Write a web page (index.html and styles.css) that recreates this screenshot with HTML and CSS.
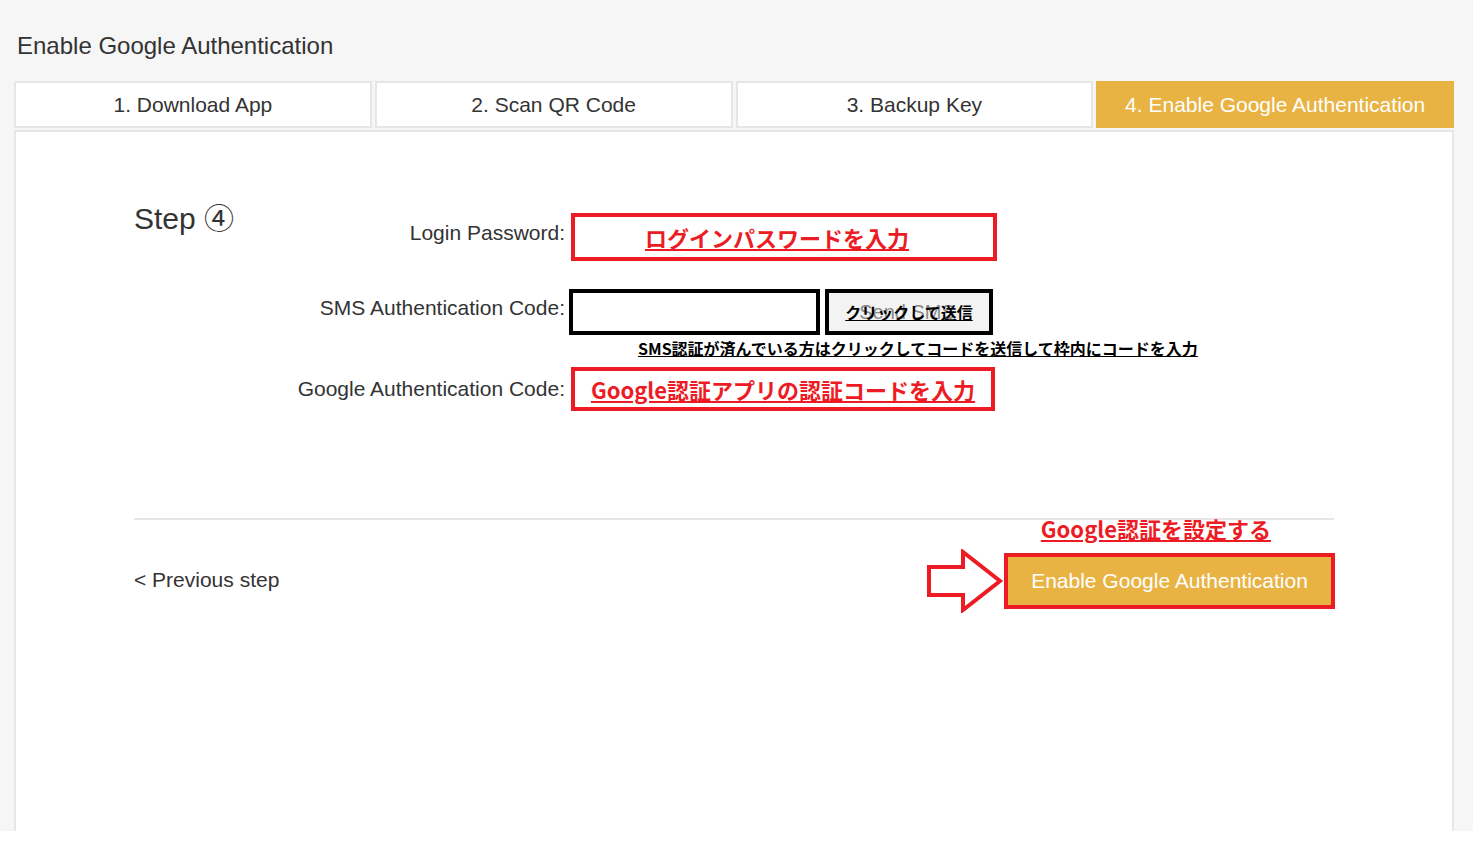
FILE: index.html
```html
<!DOCTYPE html>
<html lang="ja">
<head>
	<meta charset="UTF-8">
	<title>Enable Google Authentication</title>
	<link rel="stylesheet" href="styles.css">
</head>
<body>
	<div class="page">
		<div class="title">Enable Google Authentication</div>
		<ul class="tabs">
			<li>1. Download App</li>
			<li>2. Scan QR Code</li>
			<li>3. Backup Key</li>
			<li class="active">4. Enable Google Authentication</li>
		</ul>
		<div class="panel">
			<div class="step-wrap">
				<div class="step-title">Step ④</div>
				<div class="form">
					<div class="row row-pwd">
						<label>Login Password:</label>
						<div class="mark-box box-pwd"><a href="#">ログインパスワードを入力</a></div>
					</div>
					<div class="row row-sms">
						<label>SMS Authentication Code:</label>
						<input class="sms-input" type="text">
						<button class="sms-btn"><span class="sms-en">Send SMS</span><span class="sms-ja">クリックして送信</span></button>
					</div>
					<p class="hint">SMS認証が済んでいる方はクリックしてコードを送信して枠内にコードを入力</p>
					<div class="row row-ga">
						<label>Google Authentication Code:</label>
						<div class="mark-box box-ga"><a href="#">Google認証アプリの認証コードを入力</a></div>
					</div>
				</div>
			</div>
			<div class="footer">
				<a class="prev" href="#">&lt; Previous step</a>
				<div class="actions">
					<a class="note" href="#">Google認証を設定する</a>
					<div class="submit-row">
						<svg class="arrow" width="78" height="64" viewBox="0 0 78 64">
							<polygon points="3,18 37,18 37,3 74,32 37,61 37,46 3,46" fill="#fff" stroke="#ed1c24" stroke-width="4"/>
						</svg>
						<div class="enable-wrap">
							<button class="enable-btn">Enable Google Authentication</button>
						</div>
					</div>
				</div>
			</div>
		</div>
	</div>
</body>
</html>
```

FILE: styles.css
```css
*{
	box-sizing: border-box;
}
body{
	margin: 0;
	background-color: #fff;
	font-family: "Liberation Sans", Arial, "Noto Sans CJK JP", sans-serif;
	color: #333;
}
.page{
	height: 831px;
	overflow: hidden;
	background-color: #f6f6f6;
	padding: 0 19px 0 14px;
}
.title{
	height: 81px;
	padding: 32px 0 0 3px;
	font-size: 24px;
	line-height: 28px;
}
.tabs{
	display: flex;
	gap: 3px;
	margin: 0;
	padding: 0;
	list-style: none;
}
.tabs li{
	flex: 1;
	height: 47px;
	border: 2px solid #e6e6e6;
	background-color: #fff;
	font-size: 21px;
	line-height: 43px;
	text-align: center;
}
.tabs li.active{
	background-color: #e8b343;
	border-color: #e8b343;
	color: #fff;
}
.panel{
	margin-top: 2px;
	height: 720px;
	border: 2px solid #e6e6e6;
	background-color: #fff;
	padding: 0 118px;
}
.step-wrap{
	display: flex;
}
.step-title{
	width: 150px;
	padding-top: 69px;
	font-size: 30px;
	line-height: 36px;
}
.form{
	flex: 1;
	padding-top: 81px;
}
.row{
	display: flex;
	align-items: flex-start;
}
.row label{
	width: 281px;
	margin-right: 6px;
	margin-top: 8px;
	text-align: right;
	font-size: 21px;
	line-height: 24px;
}
.row-pwd{
	margin-bottom: 28px;
}
.row-sms label{
	margin-top: 7px;
}
.row-ga label{
	margin-top: 10px;
}
.mark-box{
	display: flex;
	align-items: center;
	justify-content: center;
	border: 4px solid #ed1c24;
	background-color: #fff;
}
.mark-box a,
.note{
	color: #ed1c24;
	font-family: "Noto Sans CJK JP", sans-serif;
	font-weight: bold;
	font-size: 22px;
	line-height: 26px;
	text-decoration: underline;
	white-space: nowrap;
}
.box-pwd{
	width: 426px;
	height: 48px;
	padding-right: 14px;
}
.box-ga{
	width: 424px;
	height: 44px;
}
.sms-input{
	width: 251px;
	height: 46px;
	margin-left: -2px;
	border: 4px solid #000;
	background-color: #fff;
	outline: none;
}
.sms-btn{
	position: relative;
	width: 168px;
	height: 46px;
	margin-left: 5px;
	border: 4px solid #000;
	background-color: #f3f3f3;
	padding: 0;
	cursor: pointer;
}
.sms-ja{
	position: relative;
	color: #000;
	font-family: "Noto Sans CJK JP", sans-serif;
	font-weight: bold;
	font-size: 16px;
	text-decoration: underline;
}
.sms-en{
	position: absolute;
	left: 0;
	right: 4px;
	top: 8px;
	color: #8a8a8a;
	font-family: "Liberation Sans", Arial, sans-serif;
	font-size: 20px;
	line-height: 22px;
	text-align: center;
}
.hint{
	margin: 3px 0 9px 354px;
	color: #000;
	font-family: "Noto Sans CJK JP", sans-serif;
	font-weight: bold;
	font-size: 16px;
	line-height: 20px;
	text-decoration: underline;
	white-space: nowrap;
}
.footer{
	margin-top: 107px;
	border-top: 2px solid #e6e6e6;
	display: flex;
	justify-content: space-between;
	align-items: flex-end;
}
.prev{
	margin-bottom: 21px;
	color: #333;
	font-size: 21px;
	line-height: 24px;
	text-decoration: none;
}
.actions{
	display: flex;
	flex-direction: column;
	align-items: flex-end;
	margin-right: -1px;
}
.note{
	margin: -5px 64px 8px 0;
}
.submit-row{
	display: flex;
	align-items: center;
}
.arrow{
	display: block;
}
.enable-wrap{
	border: 4px solid #ed1c24;
}
.enable-btn{
	display: block;
	width: 323px;
	height: 48px;
	border: none;
	background-color: #e8b343;
	color: #fff;
	font-family: "Liberation Sans", Arial, sans-serif;
	font-size: 21px;
	cursor: pointer;
}
```
